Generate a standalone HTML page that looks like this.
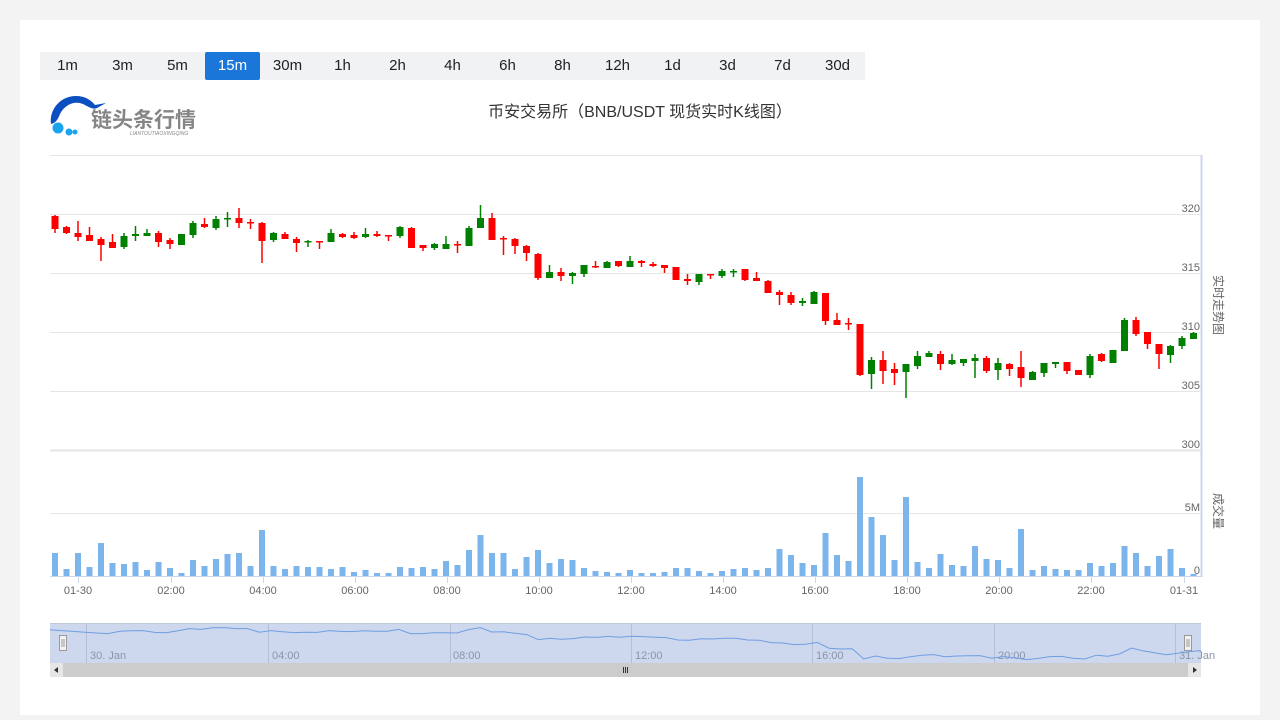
<!DOCTYPE html>
<html><head><meta charset="utf-8">
<style>
html,body{margin:0;padding:0;background:#f3f3f3;width:1280px;height:720px;overflow:hidden;font-family:"Liberation Sans","Noto Sans CJK SC",sans-serif}
#card{position:absolute;left:20px;top:20px;width:1240px;height:695px;background:#fff}
#btns{position:absolute;left:40px;top:52px;height:28px;width:825px;background:#f1f2f4;display:flex}
#btns div{width:55px;height:28px;line-height:28px;text-align:center;font-size:15px;color:#222;border-radius:2px}
#btns div.on{background:#1a76d8;color:#fff}
#title{position:absolute;left:0;width:1280px;top:98px;text-align:center;font-size:16px;color:#333}
#logo{position:absolute;left:48px;top:92px;width:170px;height:48px}
svg text{font-family:"Liberation Sans","Noto Sans CJK SC",sans-serif}
</style></head><body>
<div id="card"></div>
<div id="btns"><div>1m</div><div>3m</div><div>5m</div><div class="on">15m</div><div>30m</div><div>1h</div><div>2h</div><div>4h</div><div>6h</div><div>8h</div><div>12h</div><div>1d</div><div>3d</div><div>7d</div><div>30d</div></div>
<div id="title">币安交易所（BNB/USDT 现货实时K线图）</div>
<svg id="logo" viewBox="0 0 170 48" width="170" height="48">
<path d="M3 32 C1 18 12 4 28 4 C37 4 43 8 47 13 L58 11 L49 16 C45 18 41 15 35 12 C25 8 16 14 12 22 C10 27 8 31 3 32 Z" fill="#0b4fc0"/>
<circle cx="10" cy="36" r="5.5" fill="#1aa3ef"/><circle cx="21" cy="40" r="3.5" fill="#1aa3ef"/><circle cx="27" cy="40" r="2.5" fill="#1aa3ef"/>
<text x="43" y="35" font-size="21" font-weight="bold" fill="#858585">链头条行情</text>
<text x="82" y="43" font-size="5" font-style="italic" fill="#888">LIANTOUTIAOXINGQING</text>
</svg>
<svg id="ch" width="1280" height="720" style="position:absolute;left:0;top:0" xmlns="http://www.w3.org/2000/svg">
<line x1="50" y1="155.5" x2="1201" y2="155.5" stroke="#e6e6e6"/>
<g stroke="#e6e6e6"><line x1="50" y1="214.5" x2="1201" y2="214.5"/><line x1="50" y1="273.5" x2="1201" y2="273.5"/><line x1="50" y1="332.5" x2="1201" y2="332.5"/><line x1="50" y1="391.5" x2="1201" y2="391.5"/><line x1="50" y1="450.5" x2="1201" y2="450.5" stroke-width="2"/><line x1="50" y1="513.5" x2="1201" y2="513.5"/></g>
<line x1="1201.5" y1="155" x2="1201.5" y2="577" stroke="#ccd6eb" stroke-width="2"/>
<line x1="50" y1="576.5" x2="1201" y2="576.5" stroke="#ccd6eb"/>
<g font-size="11" fill="#666" text-anchor="end"><text x="1200" y="212">320</text><text x="1200" y="271">315</text><text x="1200" y="330">310</text><text x="1200" y="389">305</text><text x="1200" y="448">300</text><text x="1200" y="511">5M</text><text x="1200" y="574">0</text></g>
<g font-size="12" fill="#666"><text transform="translate(1214,275) rotate(90)">实时走势图</text><text transform="translate(1214,493) rotate(90)">成交量</text></g>
<g id="cand"></g><g id="vol" fill="#7cb5ec"></g>
<g id="xt" stroke="#ccd6eb"></g>
<rect x="50" y="623" width="1151" height="40" fill="#cdd8ef"/>
<line x1="50" y1="623.5" x2="1201" y2="623.5" stroke="#c0c8d8"/>
<g stroke="#b4bfd6" id="nvl"></g>
<g font-size="11" fill="#8a93a8"><text x="90" y="659">30. Jan</text><text x="272" y="659">04:00</text><text x="453" y="659">08:00</text><text x="635" y="659">12:00</text><text x="816" y="659">16:00</text><text x="998" y="659">20:00</text><text x="1179" y="659">31. Jan</text></g>
<polyline id="nline" fill="none" stroke="#6f9ee0" stroke-width="1"/>
<rect x="59.5" y="635.5" width="7" height="15" fill="#f2f2f2" stroke="#999"/><line x1="62" y1="639" x2="62" y2="647" stroke="#999"/><line x1="64" y1="639" x2="64" y2="647" stroke="#999"/>
<rect x="1184.5" y="635.5" width="7" height="15" fill="#f2f2f2" stroke="#999"/><line x1="1187" y1="639" x2="1187" y2="647" stroke="#999"/><line x1="1189" y1="639" x2="1189" y2="647" stroke="#999"/>
<rect x="50" y="663" width="1151" height="14" fill="#cccccc"/>
<rect x="50" y="663" width="13" height="14" fill="#e6e6e6"/><rect x="1188" y="663" width="13" height="14" fill="#e6e6e6"/>
<path d="M58 667 L54 670 L58 673Z" fill="#333"/><path d="M1193 667 L1197 670 L1193 673Z" fill="#333"/>
<g stroke="#333"><line x1="623.5" y1="667" x2="623.5" y2="673"/><line x1="625.5" y1="667" x2="625.5" y2="673"/><line x1="627.5" y1="667" x2="627.5" y2="673"/></g>
<g font-size="11" fill="#666" text-anchor="middle"><text x="78" y="594">01-30</text><text x="171" y="594">02:00</text><text x="263" y="594">04:00</text><text x="355" y="594">06:00</text><text x="447" y="594">08:00</text><text x="539" y="594">10:00</text><text x="631" y="594">12:00</text><text x="723" y="594">14:00</text><text x="815" y="594">16:00</text><text x="907" y="594">18:00</text><text x="999" y="594">20:00</text><text x="1091" y="594">22:00</text><text x="1184" y="594">01-31</text></g>
</svg>
<script>
var R='r',G='g';
var c=[[216,229,215,233,R],[227,233,226,234,R],[233,237,221,241,R],[235,241,227,241,R],[239,245,237,261,R],[242,248,234,248,R],[236,247,233,249,G],[234,236,226,241,G],[233,236,229,236,G],[233,242,231,247,R],[240,244,238,249,R],[234,245,234,245,G],[223,235,221,238,G],[224,227,218,228,R],[219,228,216,230,G],[218,219,212,227,G],[218,223,208,228,R],[222,223,219,229,R],[223,241,222,263,R],[233,240,232,242,G],[234,239,232,239,R],[239,243,237,252,R],[241,242,240,247,G],[241,242,241,249,R],[233,242,229,242,G],[234,237,233,238,R],[235,238,232,239,R],[234,237,228,238,G],[234,236,231,237,R],[235,236,235,241,R],[227,236,226,238,G],[228,248,227,248,R],[245,248,245,251,R],[244,248,243,250,G],[244,249,236,249,G],
[244,245,241,253,R],[228,246,226,246,G],[218,228,205,228,G],[218,240,213,240,R],[238,239,236,255,R],[239,246,238,254,R],[246,253,245,261,R],[254,278,253,280,R],[272,278,265,278,G],[272,276,268,281,R],[273,276,272,284,G],[265,274,265,277,G],[266,267,261,268,R],[262,268,261,268,G],[261,266,261,267,R],[261,267,256,267,G],[261,263,260,267,R],[264,266,262,267,R],[265,268,265,273,R],[267,280,267,280,R],[279,281,274,285,R],[274,282,274,285,G],[274,275,274,279,R],[271,276,269,278,G],[271,272,269,277,G],[269,280,269,281,R],[278,281,272,281,R],[281,293,280,293,R],[292,295,290,305,R],[295,303,292,305,R],[301,303,298,306,G],[292,304,291,304,G],[293,321,293,325,R],[320,325,313,325,R],
[323,324,318,330,R],[324,375,324,376,R],[360,374,357,389,G],[360,371,351,384,R],[369,373,363,385,R],[364,372,364,398,G],[356,366,351,369,G],[353,357,351,357,G],[354,364,351,370,R],[360,364,354,365,G],[359,363,359,366,G],[358,361,354,378,G],[358,371,356,373,R],[363,370,358,380,G],[364,369,363,376,R],[367,378,351,387,R],[372,380,371,380,G],[363,373,363,377,G],[362,364,362,368,G],[362,371,362,374,R],[370,375,370,375,R],[356,375,354,378,G],[354,361,353,362,R],[350,363,350,363,G],[320,351,318,351,G],[320,334,317,336,R],[332,344,332,349,R],[344,354,344,369,R],[346,355,345,363,G],[338,346,336,349,G],[333,339,332,339,G]];
var v=[553,569,553,567,543,563,564,562,570,562,568,573,560,566,559,554,553,566,530,566,569,566,567,567,569,567,572,570,573,573,567,568,567,569,561,565,550,535,553,553,569,557,550,563,559,560,568,571,572,573,570,573,573,572,568,568,571,573,571,569,568,570,568,549,555,563,565,533,555,561,477,517,535,560,497,562,568,554,565,566,546,559,560,568,529,570,566,569,570,570,563,566,563,546,553,566,556,549,568,574];
var NS='http://www.w3.org/2000/svg';
function el(p,t,a){var e=document.createElementNS(NS,t);for(var k in a)e.setAttribute(k,a[k]);p.appendChild(e);return e;}
var cg=document.getElementById('cand'),vg=document.getElementById('vol');var pts=[];
for(var k=0;k<c.length;k++){var x=55+k*11.5,d=c[k],col=d[4]==R?'#ff0000':'#008000';
el(cg,'line',{x1:x,x2:x,y1:d[2],y2:d[3],stroke:col,'stroke-width':1.5});
el(cg,'rect',{x:x-3.5,y:d[0],width:7,height:Math.max(1.5,d[1]-d[0]),fill:col});
var close=d[4]==R?d[1]:d[0];pts.push((50+k*1151/99).toFixed(1)+','+(626+(close-210)*0.2).toFixed(1));}
for(var k=0;k<v.length;k++){var x=55+k*11.5;el(vg,'rect',{x:x-3,y:v[k],width:6,height:576-v[k]});}
var xt=document.getElementById('xt');[78,171,263,355,447,539,631,723,815,907,999,1091,1184].forEach(function(x){el(xt,'line',{x1:x+.5,x2:x+.5,y1:577,y2:583});});
var nv=document.getElementById('nvl');[86,268,450,631,812,994,1175].forEach(function(x){el(nv,'line',{x1:x+.5,x2:x+.5,y1:624,y2:663});});
document.getElementById('nline').setAttribute('points',pts.join(' '));
</script>
</body></html>
